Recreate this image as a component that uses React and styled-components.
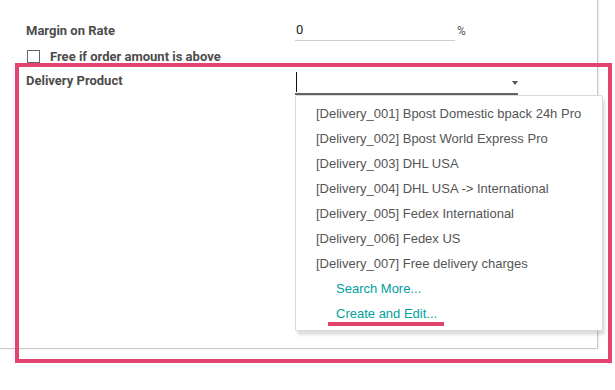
import React from 'react'
import styled, { createGlobalStyle } from 'styled-components'

const GlobalStyle = createGlobalStyle`
  html, body {
    margin: 0;
    padding: 0;
    background: #fff;
  }
  body {
    font-family: Roboto, "Liberation Sans", Arial, sans-serif;
    color: #4c4c4c;
  }
`

const Page = styled.div`
  position: relative;
  width: 615px;
  height: 390px;
  overflow: hidden;
  background: #fff;
`

const Sheet = styled.div`
  box-sizing: border-box;
  width: 598px;
  height: 349px;
  border-right: 1px solid #c8c8c8;
  border-bottom: 1px solid #c8c8c8;
  box-shadow: 1px 0 2px rgba(0, 0, 0, 0.08);
  padding: 20px 0 0 26px;
`

const Row = styled.div`
  display: flex;
  align-items: ${p => p.$align || 'center'};
  height: ${p => p.$h}px;
  margin-top: ${p => p.$mt || 0}px;
`

const Label = styled.div`
  width: 269px;
  flex: none;
  font-size: 13px;
  font-weight: 700;
  line-height: 20px;
  color: #4c4c4c;
`

const CheckLabel = styled.label`
  display: flex;
  align-items: center;
  gap: 10px;
  margin-left: 1px;
  font-size: 13px;
  font-weight: 700;
  color: #4c4c4c;
`

const Box = styled.span`
  box-sizing: border-box;
  width: 13px;
  height: 13px;
  border: 1px solid #666;
  background: #fff;
`

const NumberField = styled.div`
  box-sizing: border-box;
  width: 160px;
  height: 21px;
  border-bottom: 1px solid #cfcfcf;
  font-size: 13px;
  line-height: 20px;
  color: #222;
  padding-left: 1px;
`

const Unit = styled.span`
  margin-left: 2px;
  font-size: 12px;
  color: #555;
`

const ComboWrap = styled.div`
  position: relative;
  margin-top: 1px;
`

const Combo = styled.div`
  box-sizing: border-box;
  width: 223px;
  height: 23px;
  border-bottom: 2px solid #646464;
  display: flex;
  align-items: center;
  justify-content: space-between;
  padding: 0 0 0 1px;
`

const Cursor = styled.span`
  width: 1px;
  height: 20px;
  background: #111;
  align-self: flex-start;
`

const Caret = styled.span`
  width: 0;
  height: 0;
  border-left: 3.5px solid transparent;
  border-right: 3.5px solid transparent;
  border-top: 4px solid #555;
`

const Menu = styled.ul`
  position: absolute;
  top: 100%;
  left: 0;
  box-sizing: border-box;
  width: 308px;
  margin: 0;
  padding: 5px 0 4px;
  list-style: none;
  background: #fff;
  border: 1px solid #d9d9d9;
  border-radius: 2px;
  box-shadow: 2px 4px 3px rgba(0, 0, 0, 0.13);
  font-family: "Liberation Sans", Arial, sans-serif;
  font-size: 13px;
`

const Item = styled.li`
  height: 25px;
  line-height: 25px;
  padding-left: ${p => (p.$action ? 40 : 20)}px;
  color: ${p => (p.$action ? '#00a09d' : '#555')};
  white-space: nowrap;
`

const Frame = styled.div`
  position: absolute;
  left: 15px;
  top: 63px;
  width: 597px;
  height: 300px;
  box-sizing: border-box;
  border: 4px solid #e2446d;
  pointer-events: none;
`

const Marker = styled.div`
  position: absolute;
  left: 328px;
  top: 322px;
  width: 116px;
  height: 4px;
  background: #e2446d;
`

const products = [
  '[Delivery_001] Bpost Domestic bpack 24h Pro',
  '[Delivery_002] Bpost World Express Pro',
  '[Delivery_003] DHL USA',
  '[Delivery_004] DHL USA -> International',
  '[Delivery_005] Fedex International',
  '[Delivery_006] Fedex US',
  '[Delivery_007] Free delivery charges',
]

export default function App() {
  return (
    <Page>
      <GlobalStyle />
      <Sheet>
        <Row $h={21}>
          <Label>Margin on Rate</Label>
          <NumberField>0</NumberField>
          <Unit>%</Unit>
        </Row>
        <Row $h={20} $mt={5}>
          <CheckLabel>
            <Box />
            Free if order amount is above
          </CheckLabel>
        </Row>
        <Row $h={24} $mt={5} $align="flex-start">
          <Label>Delivery Product</Label>
          <ComboWrap>
            <Combo>
              <Cursor />
              <Caret />
            </Combo>
            <Menu>
              {products.map(p => (
                <Item key={p}>{p}</Item>
              ))}
              <Item $action>Search More...</Item>
              <Item $action>Create and Edit...</Item>
            </Menu>
          </ComboWrap>
        </Row>
      </Sheet>
      <Frame />
      <Marker />
    </Page>
  )
}
